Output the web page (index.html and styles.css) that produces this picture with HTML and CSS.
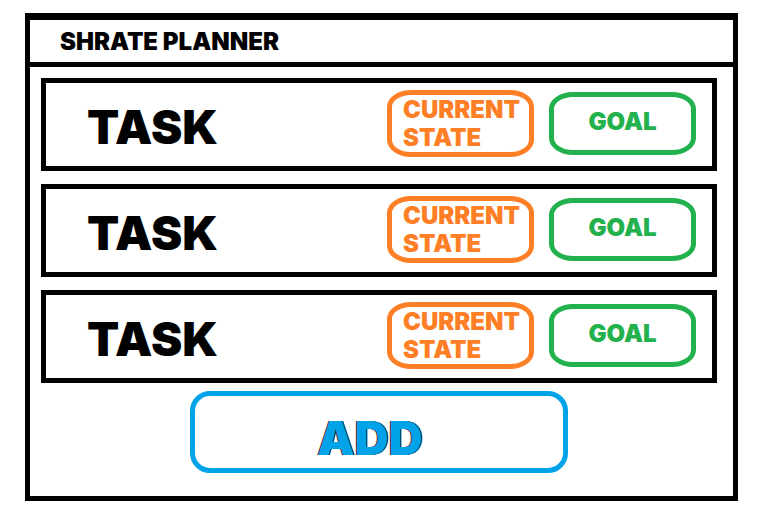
FILE: index.html
```html
<!DOCTYPE html>
<html lang="en">
<head>
  <meta charset="utf-8">
  <meta name="viewport" content="width=device-width, initial-scale=1">
  <title>Shrate Planner</title>
  <link rel="stylesheet" href="styles.css">
</head>
<body>
  <div class="planner">
    <header class="planner-header">
      <h1 class="planner-title">SHRATE PLANNER</h1>
    </header>
    <main class="planner-body">
      <ul class="task-list">
        <li class="task">
          <h2 class="task-name">TASK</h2>
          <button type="button" class="chip chip-state">CURRENT STATE</button>
          <button type="button" class="chip chip-goal">GOAL</button>
        </li>
        <li class="task">
          <h2 class="task-name">TASK</h2>
          <button type="button" class="chip chip-state">CURRENT STATE</button>
          <button type="button" class="chip chip-goal">GOAL</button>
        </li>
        <li class="task">
          <h2 class="task-name">TASK</h2>
          <button type="button" class="chip chip-state">CURRENT STATE</button>
          <button type="button" class="chip chip-goal">GOAL</button>
        </li>
      </ul>
      <button type="button" class="add-button">ADD</button>
    </main>
  </div>
</body>
</html>
```
FILE: styles.css
```css
* {
  box-sizing: border-box;
}

body {
  margin: 0;
  background: #fff;
  color: #000;
  font-family: Inter, "Liberation Sans", sans-serif;
  font-weight: 900;
}

.planner {
  margin: 13px 22px 22px 25px;
  border: 5px solid #000;
  border-top-width: 7px;
}

.planner-header {
  padding: 8px 30px 6px;
  border-bottom: 5px solid #000;
}

.planner-title {
  margin: 0;
  font-size: 24px;
  font-weight: 900;
  line-height: 28px;
}

.planner-body {
  display: flex;
  flex-direction: column;
  padding: 11px 16px 23px 11px;
}

.task-list {
  display: flex;
  flex-direction: column;
  gap: 13px;
  margin: 0;
  padding: 0;
  list-style: none;
}

.task {
  display: flex;
  align-items: center;
  gap: 15px;
  padding: 7px 16px 9px 41px;
  border: 5px solid #000;
}

.task-name {
  flex: 1;
  margin: 0;
  padding-top: 6px;
  font-size: 47px;
  font-weight: 900;
  line-height: 56px;
}

.chip {
  width: 147px;
  border: 5px solid currentColor;
  border-radius: 24px / 17px;
  background: transparent;
  font: inherit;
  font-size: 24px;
  line-height: 28px;
}

.chip-state {
  padding: 1px 0 0 11px;
  color: #ff7f27;
  text-align: left;
}

.chip-goal {
  padding: 11px 0 14px;
  color: #22b14c;
  text-align: center;
}

.add-button {
  align-self: center;
  width: 56%;
  margin-top: 8px;
  padding: 14px 18px 2px 0;
  border: 5px solid #00a2e8;
  border-radius: 20px;
  background: transparent;
  color: #00a2e8;
  font: inherit;
  font-size: 47px;
  line-height: 56px;
  text-shadow: -1px 0 #402010, 1px 0 #102040;
}
```
